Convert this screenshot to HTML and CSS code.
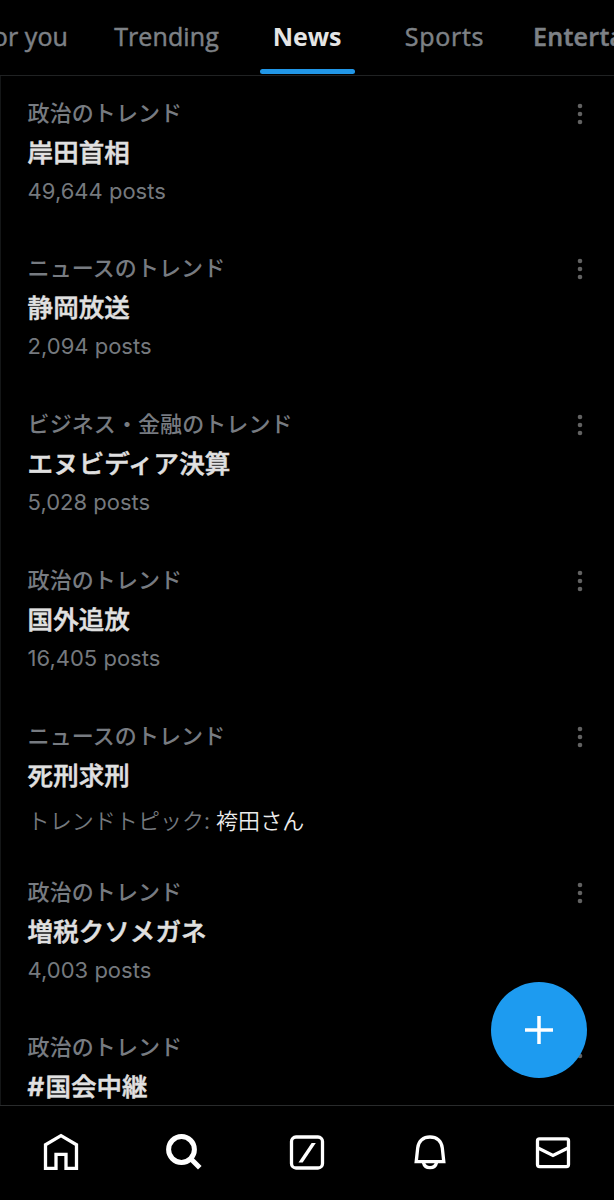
FILE: index.html
```html
<!DOCTYPE html>
<html lang="ja">
<head>
<meta charset="utf-8">
<title>News trends</title>
<link rel="stylesheet" href="styles.css">
</head>
<body>
<div class="app">
  <nav class="tabs">
    <a class="tab tab-first">For you</a>
    <a class="tab tab-trending">Trending</a>
    <a class="tab active">News</a>
    <a class="tab tab-sports">Sports</a>
    <a class="tab tab-last">Entertainment</a>
  </nav>
  <main class="feed">
    <article class="trend">
      <div class="body"><p class="category">政治のトレンド</p><h2 class="title">岸田首相</h2><p class="count">49,644 posts</p></div>
      <svg class="more" viewBox="0 0 6 22"><circle cx="3" cy="3" r="2.3"/><circle cx="3" cy="11" r="2.3"/><circle cx="3" cy="19" r="2.3"/></svg>
    </article>
    <article class="trend">
      <div class="body"><p class="category">ニュースのトレンド</p><h2 class="title">静岡放送</h2><p class="count">2,094 posts</p></div>
      <svg class="more" viewBox="0 0 6 22"><circle cx="3" cy="3" r="2.3"/><circle cx="3" cy="11" r="2.3"/><circle cx="3" cy="19" r="2.3"/></svg>
    </article>
    <article class="trend">
      <div class="body"><p class="category">ビジネス・金融のトレンド</p><h2 class="title">エヌビディア決算</h2><p class="count">5,028 posts</p></div>
      <svg class="more" viewBox="0 0 6 22"><circle cx="3" cy="3" r="2.3"/><circle cx="3" cy="11" r="2.3"/><circle cx="3" cy="19" r="2.3"/></svg>
    </article>
    <article class="trend">
      <div class="body"><p class="category">政治のトレンド</p><h2 class="title">国外追放</h2><p class="count">16,405 posts</p></div>
      <svg class="more" viewBox="0 0 6 22"><circle cx="3" cy="3" r="2.3"/><circle cx="3" cy="11" r="2.3"/><circle cx="3" cy="19" r="2.3"/></svg>
    </article>
    <article class="trend">
      <div class="body"><p class="category">ニュースのトレンド</p><h2 class="title">死刑求刑</h2><p class="topic">トレンドトピック: <span class="topic-link">袴田さん</span></p></div>
      <svg class="more" viewBox="0 0 6 22"><circle cx="3" cy="3" r="2.3"/><circle cx="3" cy="11" r="2.3"/><circle cx="3" cy="19" r="2.3"/></svg>
    </article>
    <article class="trend">
      <div class="body"><p class="category">政治のトレンド</p><h2 class="title">増税クソメガネ</h2><p class="count">4,003 posts</p></div>
      <svg class="more" viewBox="0 0 6 22"><circle cx="3" cy="3" r="2.3"/><circle cx="3" cy="11" r="2.3"/><circle cx="3" cy="19" r="2.3"/></svg>
    </article>
    <article class="trend">
      <div class="body"><p class="category">政治のトレンド</p><h2 class="title"><span class="hash">#</span>国会中継</h2></div>
      <svg class="more" viewBox="0 0 6 22"><circle cx="3" cy="3" r="2.3"/><circle cx="3" cy="11" r="2.3"/><circle cx="3" cy="19" r="2.3"/></svg>
    </article>
  </main>
  <button class="compose" aria-label="Compose"><svg viewBox="0 0 28 28"><path d="M14 0v28M0 14h28"/></svg></button>
  <nav class="bottom-bar">
    <svg class="icon" viewBox="0 0 40 40"><path d="M4.500 36.300V12.800L20 3.700l15.500 9.100v23.500H25V22.300h-10v14z"/></svg>
    <svg class="icon search" viewBox="0 0 40 40"><circle cx="17.500" cy="17.500" r="12.900"/><path d="M26.500 26.500l9.300 9.300"/></svg>
    <svg class="icon" viewBox="0 0 40 40"><rect x="4.500" y="5" width="31" height="31" rx="4.500"/><path class="slash" d="M11.500 30.500h4.200L28.800 11h-4.200z"/></svg>
    <svg class="icon" viewBox="0 0 40 40"><path d="M6.200 29.700L7.700 16C8.500 8.900 13.500 5 20 5s11.500 3.900 12.300 11l1.500 13.700z"/><path d="M13.400 30.300c.8 3.700 3.400 5.400 6.600 5.400s5.800-1.700 6.600-5.400"/></svg>
    <svg class="icon" viewBox="0 0 40 40"><rect x="4.500" y="6.800" width="31" height="27.800" rx="2"/><path d="M4.500 15.800L20 23.400l15.500-7.600"/></svg>
  </nav>
</div>
</body>
</html>
```
FILE: styles.css
```css
* { box-sizing: border-box; }
body { margin: 0; background: #000; color: #e0e0e0; font-family: Inter, "Noto Sans CJK JP", sans-serif; }
p, h2 { margin: 0; }
.app { position: relative; display: grid; grid-template-rows: 76px 1029px 95px; width: 614px; height: 1200px; overflow: hidden; }
.tabs { display: grid; grid-template-columns: 91px 151px 130px 145px 97px; border-bottom: 1px solid #202223; overflow: hidden; }
.tab { position: relative; display: flex; justify-content: center; height: 75px; font: 400 25px/73px "Open Sans", sans-serif; letter-spacing: 0.1px; color: #7d8186; -webkit-text-stroke: 0.500px currentColor; white-space: nowrap; }
.tab-first { justify-content: flex-end; padding-right: 23px; }
.tab-sports { letter-spacing: 0.700px; }
.tab-last { justify-content: flex-start; padding-left: 16px; font-weight: 600; letter-spacing: 0.300px; }
.active { color: #e5e5e5; font-weight: 700; letter-spacing: -0.100px; -webkit-text-stroke: 0; }
.active::after { content: ""; position: absolute; left: 18px; bottom: 1px; width: 95px; height: 5px; border-radius: 3px; background: #2196e6; }
.feed { border-left: 1px solid #141617; overflow: hidden; }
.trend { display: flex; justify-content: space-between; height: 155.800px; padding: 18.600px 31px 0 26.600px; }
.category { font: 500 22px/32px "Noto Sans CJK JP", sans-serif; letter-spacing: 0.080px; color: #777b81; }
.title { margin-top: 6px; font: 500 25.500px/36px "Noto Sans CJK JP", sans-serif; letter-spacing: 0.060px; color: #e0e0e0; -webkit-text-stroke: 0.500px #e0e0e0; }
.hash { margin-right: 1px; font-family: Inter, sans-serif; font-weight: 600; font-size: 26px; line-height: 1; }
.count { margin-top: 6px; font-size: 22px; line-height: 32px; color: #75797e; }
.topic { margin-top: 11px; font: 350 22px/32px "Noto Sans CJK JP", sans-serif; letter-spacing: 0.060px; color: #75797e; }
.topic-link { margin-left: 1px; color: #ececec; }
.more { flex: none; width: 6px; height: 22px; margin-top: 8px; fill: #626262; }
.compose { position: absolute; right: 27px; top: 982px; width: 96px; height: 96px; padding: 0; border: 0; border-radius: 50%; display: grid; place-items: center; background: #1d9bf0; }
.compose svg { width: 28px; height: 28px; stroke: #fff; stroke-width: 3.500; }
.bottom-bar { display: grid; grid-template-columns: repeat(5, 122.900px); justify-content: center; justify-items: center; padding-top: 26px; border-top: 1px solid #292b2c; }
.icon { width: 40px; height: 40px; fill: none; stroke: #fff; stroke-width: 3.300; }
.search { stroke-width: 5; }
.icon .slash { fill: #fff; stroke: none; }
```
